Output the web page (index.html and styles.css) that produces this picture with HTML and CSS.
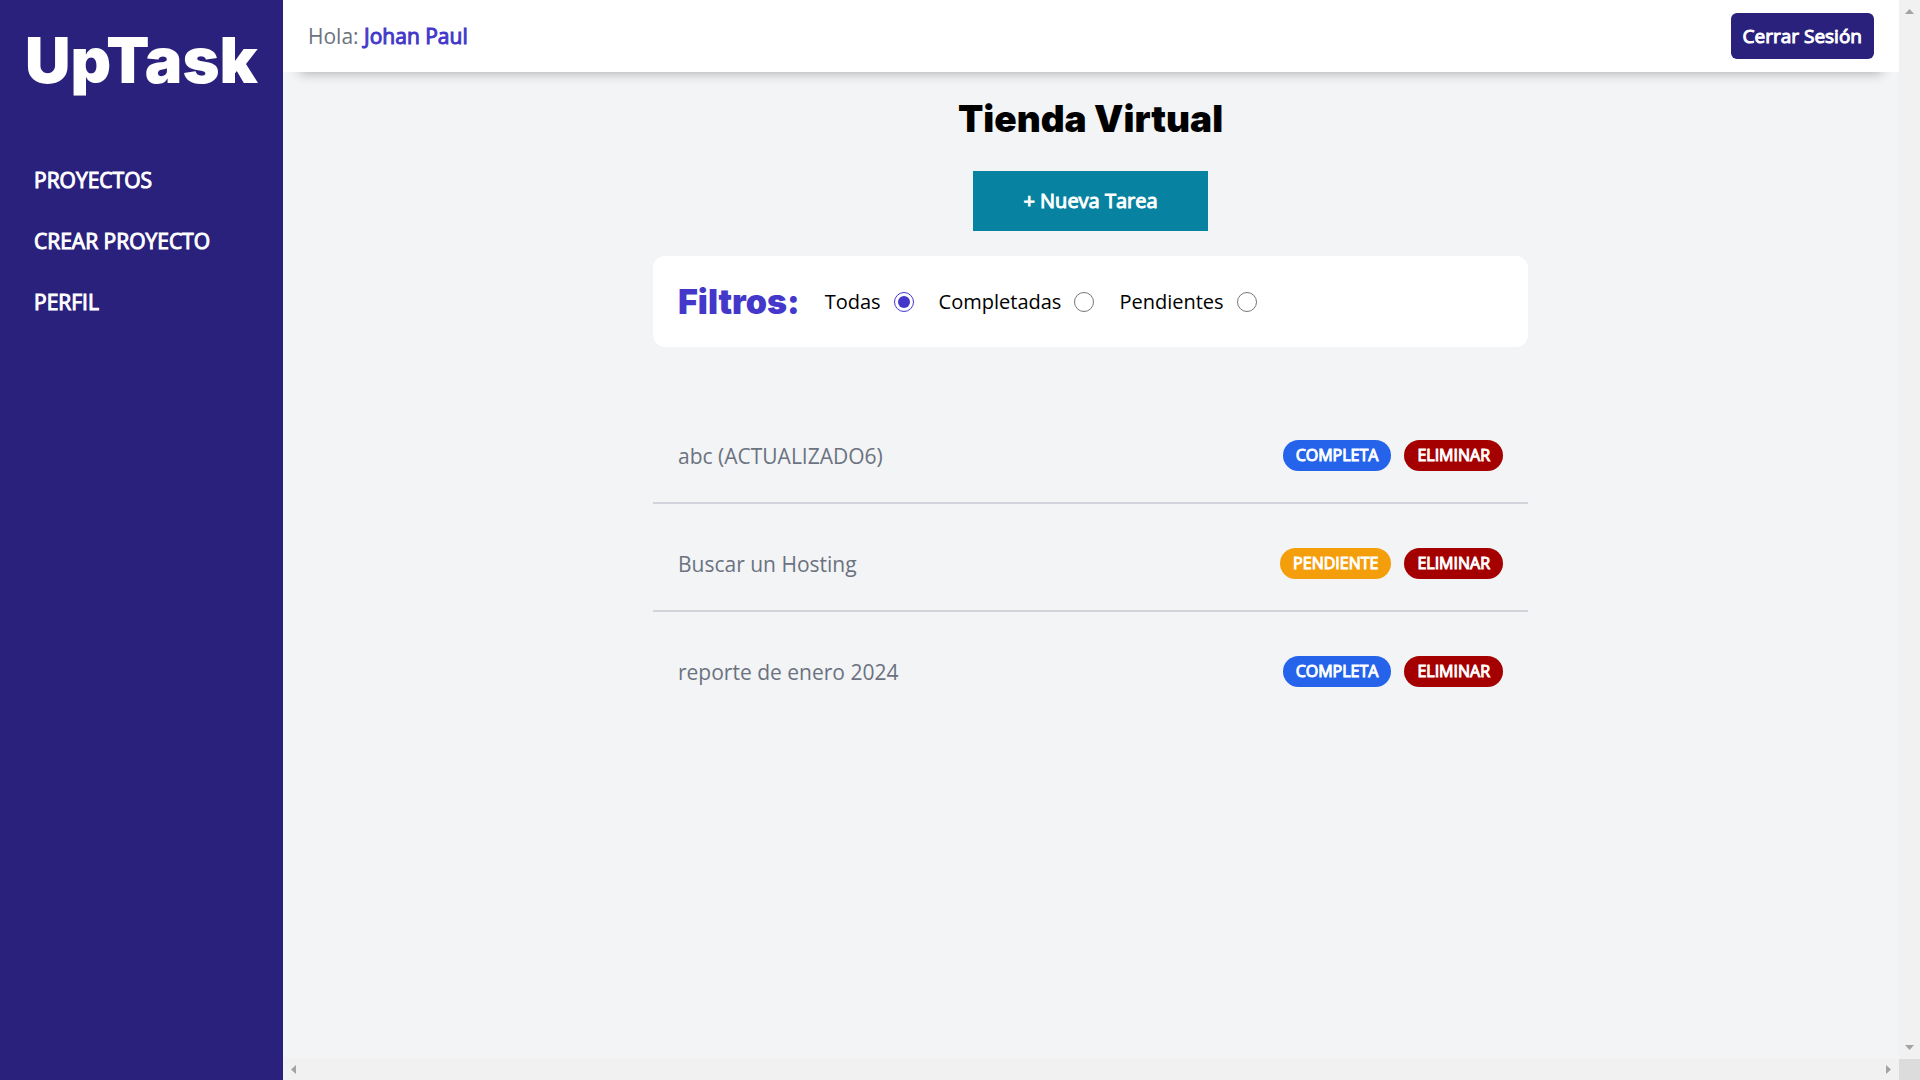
FILE: index.html
```html
<!DOCTYPE html>
<html lang="es">
<head>
<meta charset="utf-8">
<meta name="viewport" content="width=device-width, initial-scale=1">
<title>UpTask</title>
<link rel="stylesheet" href="styles.css">
</head>
<body>
<div class="app">
  <aside class="sidebar">
    <h1 class="brand">UpTask</h1>
    <nav class="nav">
      <a href="#proyectos">PROYECTOS</a>
      <a href="#crear">CREAR PROYECTO</a>
      <a href="#perfil">PERFIL</a>
    </nav>
  </aside>
  <div class="viewport">
    <div class="page">
      <header class="topbar">
        <p class="greeting">Hola: <span class="user">Johan Paul</span></p>
        <button type="button" class="logout">Cerrar Sesión</button>
      </header>
      <main class="content">
        <h2 class="title">Tienda Virtual</h2>
        <button type="button" class="new-task">+ Nueva Tarea</button>
        <form class="filters">
          <h3 class="filters-title">Filtros:</h3>
          <div class="option"><label for="todas">Todas</label><input type="radio" name="filtro" id="todas" checked></div>
          <div class="option"><label for="completadas">Completadas</label><input type="radio" name="filtro" id="completadas"></div>
          <div class="option"><label for="pendientes">Pendientes</label><input type="radio" name="filtro" id="pendientes"></div>
        </form>
        <ul class="tasks">
          <li class="task">
            <p class="task-name">abc (ACTUALIZADO6)</p>
            <div class="actions"><button type="button" class="badge complete">COMPLETA</button><button type="button" class="badge remove">ELIMINAR</button></div>
          </li>
          <li class="task">
            <p class="task-name">Buscar un Hosting</p>
            <div class="actions"><button type="button" class="badge pending">PENDIENTE</button><button type="button" class="badge remove">ELIMINAR</button></div>
          </li>
          <li class="task">
            <p class="task-name">reporte de enero 2024</p>
            <div class="actions"><button type="button" class="badge complete">COMPLETA</button><button type="button" class="badge remove">ELIMINAR</button></div>
          </li>
        </ul>
      </main>
    </div>
    <div class="scroll-y" aria-hidden="true">
      <svg width="21" height="21" viewBox="0 0 21 21"><path d="M6 14 10.500 9 15 14z"/></svg>
      <svg width="21" height="21" viewBox="0 0 21 21"><path d="M6 7 10.500 12 15 7z"/></svg>
    </div>
    <div class="scroll-x" aria-hidden="true">
      <svg width="21" height="21" viewBox="0 0 21 21"><path d="M13 6 8 10.500 13 15z"/></svg>
      <svg width="21" height="21" viewBox="0 0 21 21"><path d="M8 6 13 10.500 8 15z"/></svg>
    </div>
    <div class="scroll-corner"></div>
  </div>
</div>
</body>
</html>
```
FILE: styles.css
```css
*, *::before, *::after { box-sizing: border-box; }

body, h1, h2, h3, p, ul { margin: 0; padding: 0; }

body {
  background: #f3f4f6;
  color: #000;
  font-family: "Open Sans", "Noto Sans", sans-serif;
  font-size: 20px;
  font-weight: 400;
  line-height: 30px;
}

button {
  border: 0;
  color: #fff;
  font: inherit;
  cursor: pointer;
  -webkit-text-stroke: 1px currentColor;
}

.app { display: flex; min-height: 100vh; }

.sidebar {
  flex: none;
  width: 283px;
  padding: 25px;
  background: #2a217c;
  color: #fff;
}

.brand {
  font-family: Inter, sans-serif;
  font-size: 63px;
  font-weight: 900;
  line-height: 70px;
}

.nav {
  display: flex;
  flex-direction: column;
  gap: 31px;
  margin-top: 70px;
  padding-left: 9px;
}

.nav a {
  color: #fff;
  font-size: 21px;
  text-decoration: none;
  -webkit-text-stroke: 1px currentColor;
}

.viewport {
  flex: 1;
  min-width: 0;
  display: grid;
  grid-template-columns: minmax(0, 1fr) 21px;
  grid-template-rows: 1fr 21px;
}

.topbar {
  display: flex;
  align-items: center;
  justify-content: space-between;
  padding: 13px 25px;
  background: #fff;
  box-shadow: 0 18px 12px -17px rgba(0, 0, 0, 0.3);
}

.greeting { color: #6b7280; font-size: 21px; }

.user { color: #4338ca; -webkit-text-stroke: 1px currentColor; }

.logout {
  padding: 8px 12px;
  border-radius: 6px;
  background: #2a217c;
  font-size: 19px;
}

.content {
  display: flex;
  flex-direction: column;
  align-items: center;
  padding: 25px 26px 25px 25px;
}

.title {
  font-family: Inter, sans-serif;
  font-size: 37px;
  font-weight: 900;
  line-height: 44px;
}

.new-task {
  margin-top: 30px;
  padding: 15px 50px;
  background: #0782a0;
}

.filters {
  display: flex;
  align-items: center;
  gap: 25px;
  width: 100%;
  max-width: 875px;
  margin-top: 25px;
  padding: 25px;
  border-radius: 12px;
  background: #fff;
}

.filters-title {
  color: #4338ca;
  font-family: Inter, sans-serif;
  font-size: 34px;
  font-weight: 900;
  line-height: 41px;
}

.option { display: flex; align-items: center; gap: 13px; }

.option input {
  width: 20px;
  height: 20px;
  margin: 0;
  accent-color: #4338ca;
}

.tasks {
  width: 100%;
  max-width: 875px;
  margin-top: 49px;
  list-style: none;
}

.task {
  display: flex;
  align-items: center;
  justify-content: space-between;
  gap: 25px;
  padding: 44px 25px 31px;
}

.task:not(:last-child) { border-bottom: 2px solid #d1d5db; }

.task-name { color: #6b7280; font-size: 21px; }

.actions { display: flex; gap: 13px; }

.badge {
  padding: 3px 13px;
  border-radius: 16px;
  font-size: 16px;
  line-height: 25px;
}

.complete { background: #2563eb; }
.pending { background: #f59e0b; }
.remove { background: #a50000; }

.scroll-y, .scroll-x {
  display: flex;
  justify-content: space-between;
  background: #f1f1f1;
  fill: #a3a3a3;
}

.scroll-y { flex-direction: column; }

.scroll-corner { background: #dcdcdc; }
```
